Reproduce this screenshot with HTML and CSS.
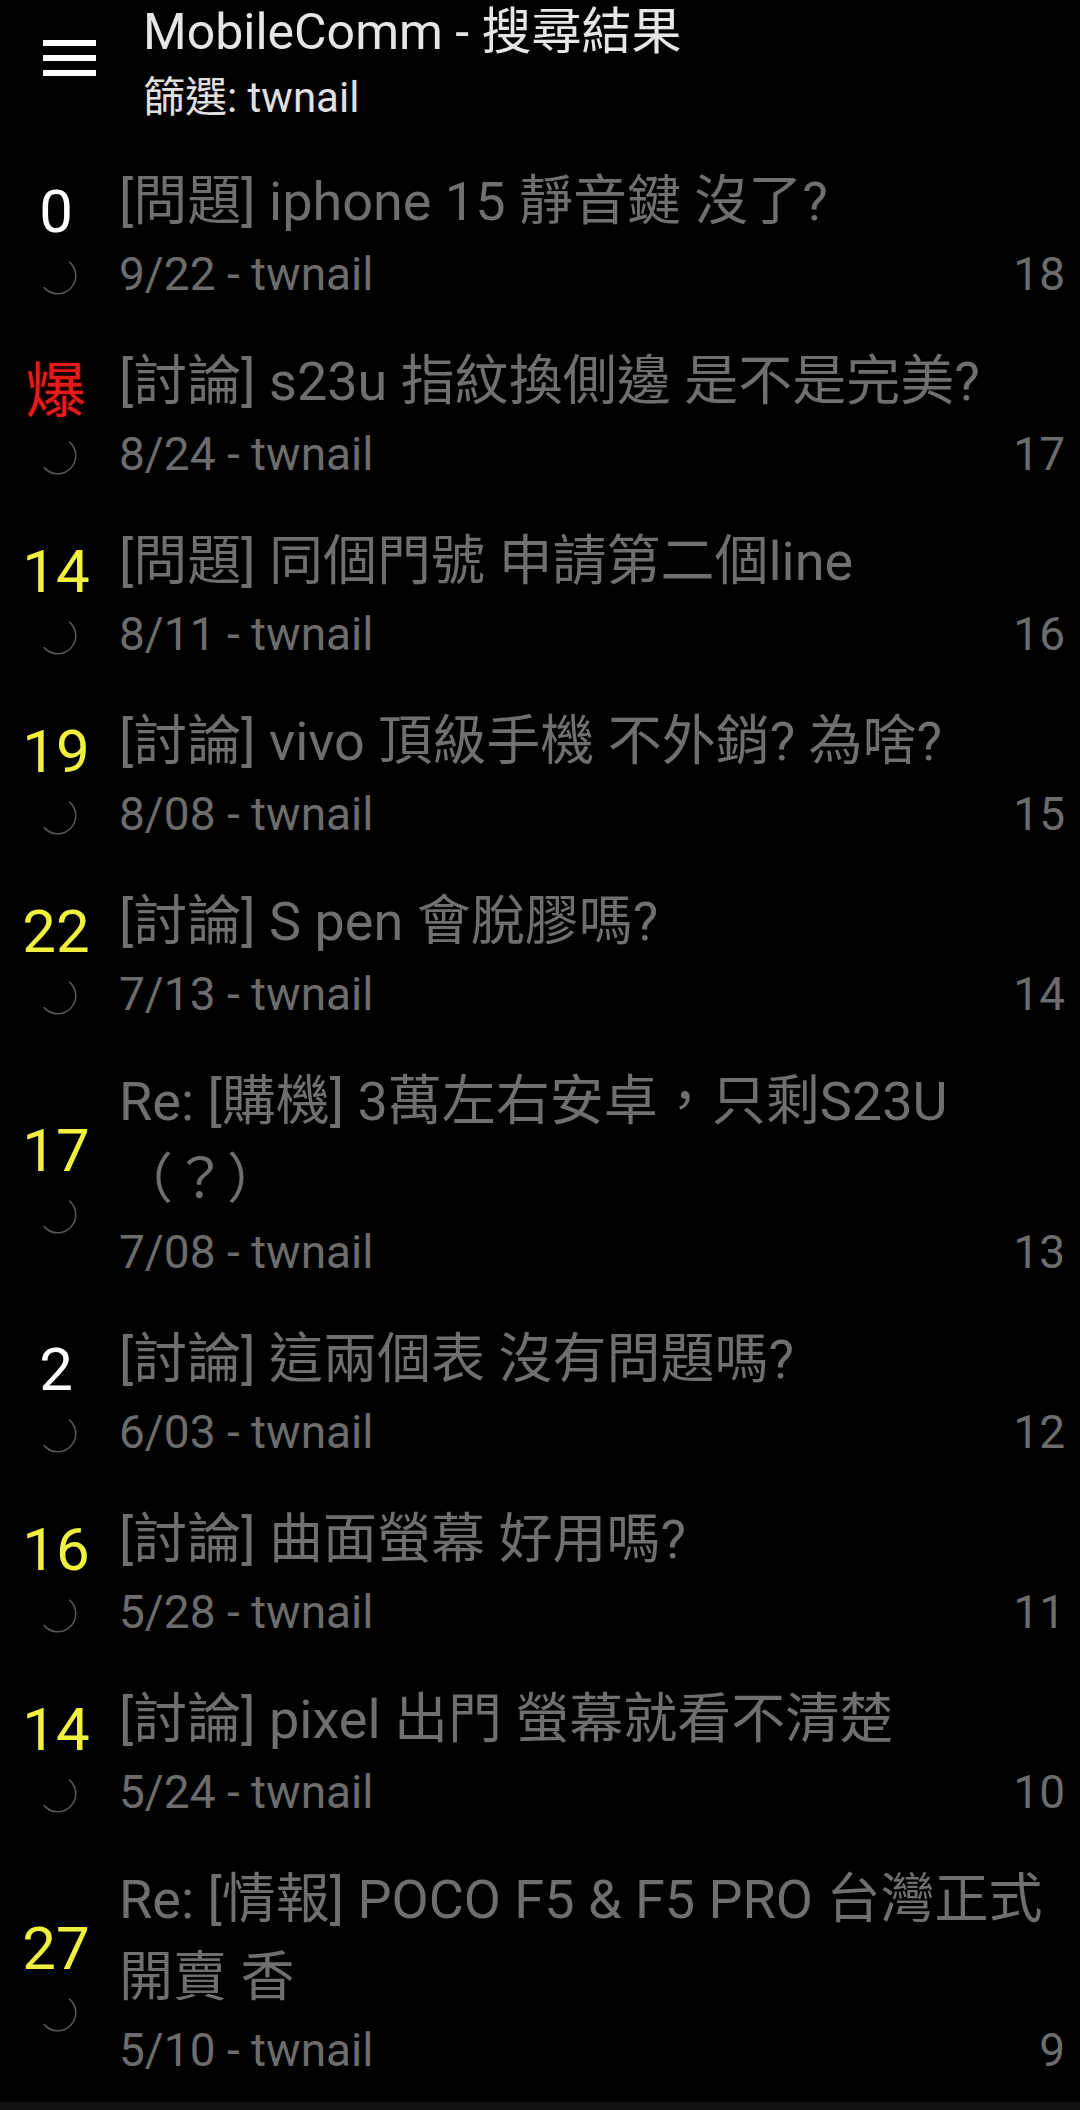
FILE: index.html
```html
<!DOCTYPE html>
<html lang="zh-Hant">
<head>
    <meta charset="UTF-8">
    <meta name="viewport" content="width=device-width, initial-scale=1.0">
    <title>MobileComm - 搜尋結果</title>
    <link rel="stylesheet" href="styles.css">
</head>
<body>
    <div class="app">
        <div class="toolbar">
            <div class="menu-btn">
                <svg width="53" height="36" viewBox="0 0 53 36">
                    <rect x="0" y="0" width="53" height="6" fill="#fff"/>
                    <rect x="0" y="15" width="53" height="6" fill="#fff"/>
                    <rect x="0" y="30" width="53" height="6" fill="#fff"/>
                </svg>
            </div>
            <div class="toolbar-text">
                <div class="toolbar-title">MobileComm - 搜尋結果</div>
                <div class="toolbar-sub">篩選: twnail</div>
            </div>
        </div>

        <div id="posts"></div>
    </div>

    <script>
        const posts = [
            { push: "0",  level: "white",  title: "[問題] iphone 15 靜音鍵 沒了?", date: "9/22", author: "twnail", no: 18 },
            { push: "爆", level: "red",    title: "[討論] s23u 指紋換側邊 是不是完美?", date: "8/24", author: "twnail", no: 17 },
            { push: "14", level: "yellow", title: "[問題] 同個門號 申請第二個line", date: "8/11", author: "twnail", no: 16 },
            { push: "19", level: "yellow", title: "[討論] vivo 頂級手機 不外銷? 為啥?", date: "8/08", author: "twnail", no: 15 },
            { push: "22", level: "yellow", title: "[討論] S pen 會脫膠嗎?", date: "7/13", author: "twnail", no: 14 },
            { push: "17", level: "yellow", title: "Re: [購機] 3萬左右安卓，只剩S23U（？）", date: "7/08", author: "twnail", no: 13 },
            { push: "2",  level: "white",  title: "[討論] 這兩個表 沒有問題嗎?", date: "6/03", author: "twnail", no: 12 },
            { push: "16", level: "yellow", title: "[討論] 曲面螢幕 好用嗎?", date: "5/28", author: "twnail", no: 11 },
            { push: "14", level: "yellow", title: "[討論] pixel 出門 螢幕就看不清楚", date: "5/24", author: "twnail", no: 10 },
            { push: "27", level: "yellow", title: "Re: [情報] POCO F5 &amp; F5 PRO 台灣正式開賣 香", date: "5/10", author: "twnail", no: 9 }
        ];

        const spinner = `
            <svg class="spinner" width="40" height="40" viewBox="0 0 40 40">
                <path d="M31.6 6.2 A18 18 0 1 1 6.2 31.6" fill="none" stroke="#575757" stroke-width="1.6" stroke-linecap="round"/>
            </svg>`;

        function renderPosts() {
            const list = document.getElementById("posts");
            list.innerHTML = "";
            posts.forEach(post => {
                list.innerHTML += `
                    <div class="post">
                        <div class="badge">
                            <div class="push push-${post.level}">${post.push}</div>
                            ${spinner}
                        </div>
                        <div class="post-body">
                            <div class="post-title">${post.title}</div>
                            <div class="post-meta">
                                <span>${post.date} - ${post.author}</span>
                                <span>${post.no}</span>
                            </div>
                        </div>
                    </div>
                `;
            });
        }

        renderPosts();
    </script>
</body>
</html>
```

FILE: styles.css
```css
body { margin: 0; background: #121212; font-family: Roboto, "Noto Sans CJK TC", sans-serif; }
.app { background: #000; }

.toolbar { display: flex; height: 146px; }
.menu-btn { width: 143px; flex: none; box-sizing: border-box; padding: 40px 0 0 43px; }
.menu-btn svg { display: block; }
.toolbar-text { padding-top: 2px; }
.toolbar-title { font-size: 50px; line-height: 60px; color: #e6e6e6; white-space: nowrap; }
.toolbar-sub { font-size: 42px; line-height: 60px; color: #e0e0e0; margin-top: 6px; }

.post { display: flex; align-items: center; padding: 17px 15px 19px 0; }
.badge { width: 112px; flex: none; margin-right: 7px; display: flex; flex-direction: column; align-items: center; gap: 7px; }
.push { font-size: 60px; line-height: 75px; }
.push-white { color: #fff; }
.push-yellow { color: #f0f03e; }
.push-red { color: #e31b1b; text-shadow: 0 0 3px rgba(255, 0, 0, 0.5); }
.spinner { display: block; margin-left: 4px; }

.post-body { flex: 1; min-width: 0; }
.post-title { font-size: 54px; line-height: 78px; color: #6f6f6f; }
.post-meta { display: flex; justify-content: space-between; font-size: 46px; line-height: 66px; color: #6c6c6c; }
```
